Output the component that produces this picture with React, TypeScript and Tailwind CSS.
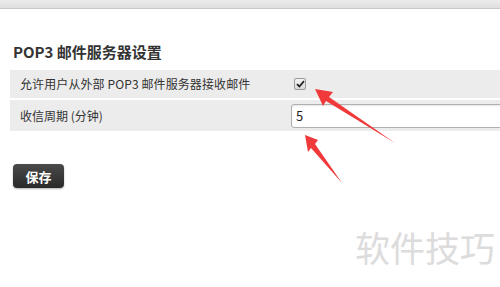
import React from "react";

export default function App() {
  const font = { fontFamily: '"Noto Sans CJK SC", "Noto Sans", sans-serif' };
  return (
    <div className="relative w-[500px] h-[287px] overflow-hidden bg-white text-[#333]" style={font}>
      <div className="h-[9px] bg-gradient-to-b from-[#ececec] to-[#dedede] border-b border-[#c8c8c8]" />
      <div className="pl-[13px] pt-[33px] text-[15px] font-bold leading-[20px] text-[#333]">POP3 邮件服务器设置</div>
      <div className="ml-[10px] mt-[8px] flex flex-col gap-[2px] w-[600px]">
        <div className="flex items-center h-[28px] bg-[#ececec]">
          <div className="w-[280px] pl-[10px] text-[12px] leading-none tracking-[0.1px]">允许用户从外部 POP3 邮件服务器接收邮件</div>
          <div className="ml-[4px] w-[12px] h-[12px] rounded-[2px] border border-[#9a9a9a] bg-gradient-to-b from-[#f4f4f4] to-[#d8d8d8] flex items-center justify-center">
            <svg width="9" height="8" viewBox="0 0 9 8"><path d="M1 4.2 L3.4 6.5 L8 1.2" stroke="#222" strokeWidth="1.8" fill="none" /></svg>
          </div>
        </div>
        <div className="flex items-center h-[31px] bg-[#ececec]">
          <div className="w-[281px] pl-[10px] text-[12px] leading-none">收信周期 (分钟)</div>
          <div className="h-[24px] w-[300px] rounded-[3px] border border-[#b0b0b0] bg-white flex items-center pl-[4px] text-[13px] text-[#222] shadow-[inset_0_1px_2px_rgba(0,0,0,0.1)]">5</div>
        </div>
      </div>
      <button className="ml-[13px] mt-[33px] w-[51px] h-[24px] rounded-[4px] bg-gradient-to-b from-[#4a4a4a] to-[#2a2a2a] text-white text-[13px] font-bold leading-none shadow-[0_1px_2px_rgba(0,0,0,0.3)]">保存</button>
      <div className="absolute left-[355px] top-[224px] text-[35px] leading-[46px] text-[#dcdcdc]">软件技巧</div>
      <svg className="absolute left-0 top-0" width="500" height="287">
        <polygon points="315,89 333,92 329,97 395,143 326,101 323,106" fill="#f0393a" />
        <polygon points="305,135 318,140 315,144 342,183 311,148 308,152" fill="#f0393a" />
      </svg>
    </div>
  );
}
